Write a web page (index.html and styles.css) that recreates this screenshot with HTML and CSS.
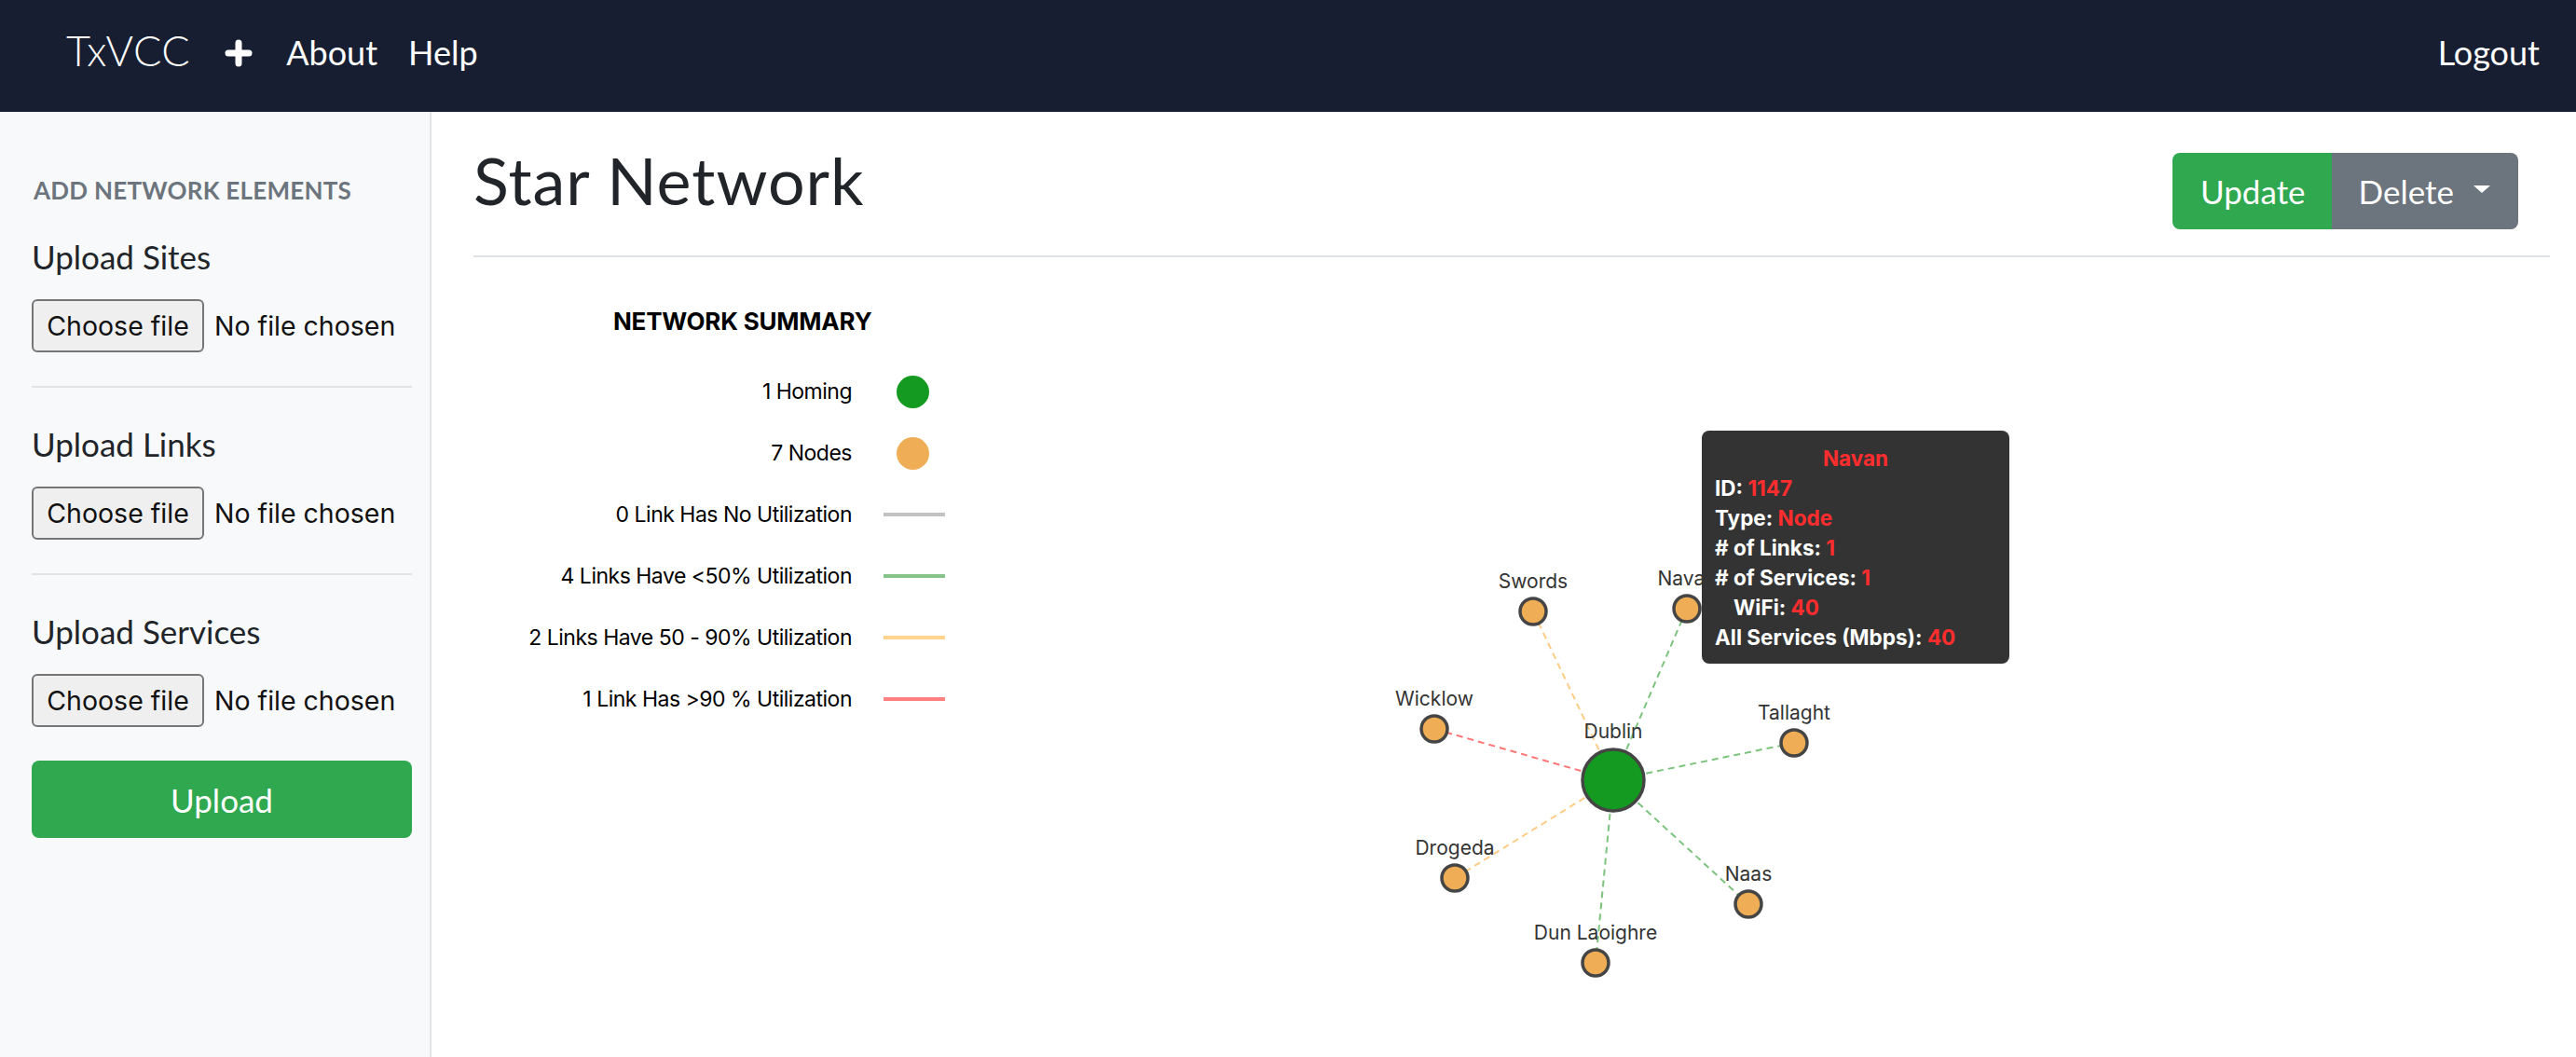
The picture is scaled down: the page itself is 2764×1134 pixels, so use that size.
FILE: index.html
```html
<!DOCTYPE html>
<html lang="en">
<head>
<meta charset="utf-8">
<title>TxVCC - Star Network</title>
<link rel="stylesheet" href="styles.css">
</head>
<body>
<nav class="navbar">
  <a class="brand">TxVCC</a>
  <a class="nav-plus" aria-label="Add">
    <svg width="30" height="30" viewBox="0 0 30 30"><path d="M15 4v22M4 15h22" stroke="#fff" stroke-width="7" stroke-linecap="round" fill="none"/></svg>
  </a>
  <a class="nav-link">About</a>
  <a class="nav-link">Help</a>
  <a class="nav-link logout">Logout</a>
</nav>
<div class="layout">
  <aside class="sidebar">
    <h6 class="sidebar-heading">ADD NETWORK ELEMENTS</h6>
    <section class="upload-section">
      <h5 class="upload-title">Upload Sites</h5>
      <div class="file-input"><span class="file-btn">Choose file</span><span class="file-name">No file chosen</span></div>
      <hr class="side-hr">
    </section>
    <section class="upload-section">
      <h5 class="upload-title">Upload Links</h5>
      <div class="file-input"><span class="file-btn">Choose file</span><span class="file-name">No file chosen</span></div>
      <hr class="side-hr">
    </section>
    <section class="upload-section last">
      <h5 class="upload-title">Upload Services</h5>
      <div class="file-input"><span class="file-btn">Choose file</span><span class="file-name">No file chosen</span></div>
    </section>
    <button class="upload-btn">Upload</button>
  </aside>
  <main class="main">
    <header class="page-header">
      <h1 class="page-title">Star Network</h1>
      <div class="btn-group">
        <button class="btn btn-update">Update</button>
        <button class="btn btn-delete">Delete<span class="caret"></span></button>
      </div>
    </header>
    <hr class="main-hr">
    <div class="content">
      <div class="legend">
        <div class="legend-heading">NETWORK SUMMARY</div>
        <div class="legend-grid">
          <span class="legend-text">1 Homing</span><span class="swatch dot dot-green"></span>
          <span class="legend-text">7 Nodes</span><span class="swatch dot dot-orange"></span>
          <span class="legend-text">0 Link Has No Utilization</span><span class="swatch bar bar-gray"></span>
          <span class="legend-text">4 Links Have &lt;50% Utilization</span><span class="swatch bar bar-green"></span>
          <span class="legend-text">2 Links Have 50 - 90% Utilization</span><span class="swatch bar bar-orange"></span>
          <span class="legend-text">1 Link Has &gt;90 % Utilization</span><span class="swatch bar bar-red"></span>
        </div>
      </div>
      <div class="graph">
        <svg class="graph-svg" width="1722" height="858" viewBox="1014 276 1722 858">
          <g class="links" fill="none" stroke-width="2" stroke-dasharray="7 5">
            <line x1="1731" y1="837" x2="1645" y2="656" stroke="#ffcc85"/>
            <line x1="1731" y1="837" x2="1810" y2="653" stroke="#7cc47e"/>
            <line x1="1731" y1="837" x2="1539" y2="782" stroke="#ff7676"/>
            <line x1="1731" y1="837" x2="1925" y2="797" stroke="#7cc47e"/>
            <line x1="1731" y1="837" x2="1561" y2="942" stroke="#ffcc85"/>
            <line x1="1731" y1="837" x2="1712" y2="1033" stroke="#7cc47e"/>
            <line x1="1731" y1="837" x2="1876" y2="970" stroke="#7cc47e"/>
          </g>
          <g class="nodes" stroke="#454545" stroke-width="3.5">
            <circle cx="1731" cy="837" r="33" fill="#149a20"/>
            <circle cx="1645" cy="656" r="14" fill="#efae56"/>
            <circle cx="1810" cy="653" r="14" fill="#efae56"/>
            <circle cx="1539" cy="782" r="14" fill="#efae56"/>
            <circle cx="1925" cy="797" r="14" fill="#efae56"/>
            <circle cx="1561" cy="942" r="14" fill="#efae56"/>
            <circle cx="1712" cy="1033" r="14" fill="#efae56"/>
            <circle cx="1876" cy="970" r="14" fill="#efae56"/>
          </g>
          <g class="labels">
            <text x="1731" y="792">Dublin</text>
            <text x="1645" y="631">Swords</text>
            <text x="1810" y="628">Navan</text>
            <text x="1539" y="757">Wicklow</text>
            <text x="1925" y="772">Tallaght</text>
            <text x="1561" y="917">Drogeda</text>
            <text x="1712" y="1008">Dun Laoighre</text>
            <text x="1876" y="945">Naas</text>
          </g>
        </svg>
        <div class="tooltip">
          <div class="tip-title">Navan</div>
          <div class="tip-row">ID: <span class="tip-val">1147</span></div>
          <div class="tip-row">Type: <span class="tip-val">Node</span></div>
          <div class="tip-row"># of Links: <span class="tip-val">1</span></div>
          <div class="tip-row"># of Services: <span class="tip-val">1</span></div>
          <div class="tip-row tip-indent">WiFi: <span class="tip-val">40</span></div>
          <div class="tip-row">All Services (Mbps): <span class="tip-val">40</span></div>
        </div>
      </div>
    </div>
  </main>
</div>
</body>
</html>
```
FILE: styles.css
```css
* { box-sizing: border-box; }
html, body { margin: 0; padding: 0; }
body {
  font-family: Lato, "Open Sans", sans-serif;
  color: #212529;
  background: #fff;
  overflow: hidden;
  height: 1134px;
}

/* Navbar */
.navbar {
  height: 120px;
  background: #171e31;
  display: flex;
  align-items: center;
  padding: 0 39px 0 71px;
  color: #fff;
}
.brand {
  font-size: 45px;
  font-weight: 300;
  letter-spacing: 0.5px;
  margin-bottom: 12px;
  line-height: 1.2;
}
.nav-plus {
  display: flex;
  margin-left: 37px;
  margin-bottom: 6px;
}
.nav-link {
  font-size: 36px;
  line-height: 1.2;
  margin-bottom: 6px;
  margin-left: 36px;
}
.nav-link + .nav-link { margin-left: 33px; }
.nav-link.logout { margin-left: auto; }

/* Layout */
.layout {
  display: flex;
  height: 1014px;
}
.sidebar {
  width: 463px;
  flex: none;
  background: #f8f9fa;
  border-right: 2px solid #e4e5e6;
  padding: 67px 19px 0 34px;
}
.sidebar-heading {
  margin: 0 0 32.5px 2px;
  font-size: 26px;
  line-height: 34px;
  font-weight: 700;
  color: #6c757d;
  letter-spacing: 0.25px;
}
.upload-title {
  margin: 0 0 25.5px;
  font-size: 35px;
  line-height: 42px;
  font-weight: 400;
  color: #212529;
}
.file-input {
  display: flex;
  align-items: center;
  height: 57px;
  font-family: Inter, "Liberation Sans", sans-serif;
  font-size: 28.5px;
  color: #111;
}
.file-btn {
  width: 185px;
  height: 57px;
  display: flex;
  align-items: center;
  justify-content: center;
  background: #efefef;
  border: 2px solid #767676;
  border-radius: 6px;
}
.file-name { margin-left: 11px; }
.side-hr {
  margin: 35.5px 0 39px;
  border: 0;
  border-top: 2px solid #e1e3e5;
  height: 0;
}
.upload-btn {
  display: block;
  width: 408px;
  height: 83px;
  margin-top: 36px;
  background: #2fa84f;
  color: #fff;
  border: 0;
  border-radius: 8px;
  font-family: Lato, sans-serif;
  font-size: 35px;
}

/* Main */
.main {
  flex: 1;
  padding: 0 28px 0 45px;
  min-width: 0;
}
.page-header {
  display: flex;
  justify-content: space-between;
  align-items: flex-start;
  padding-top: 31px;
}
.page-title {
  margin: 0;
  font-size: 70px;
  line-height: 84px;
  font-weight: 400;
  letter-spacing: 1px;
  color: #212529;
}
.btn-group {
  display: flex;
  margin-top: 13px;
  margin-right: 34px;
}
.btn {
  height: 82px;
  border: 0;
  color: #fff;
  font-family: Lato, sans-serif;
  font-size: 35px;
  display: flex;
  align-items: center;
}
.btn-update {
  background: #2fa84f;
  padding: 0 28px 0 30px;
  border-radius: 8px 0 0 8px;
}
.btn-delete {
  background: #6c757d;
  padding: 0 30px 0 29px;
  border-radius: 0 8px 8px 0;
}
.caret {
  display: inline-block;
  width: 0;
  height: 0;
  margin-left: 21px;
  margin-bottom: 4px;
  border-left: 9.5px solid transparent;
  border-right: 9.5px solid transparent;
  border-top: 8px solid #fff;
}
.main-hr {
  margin: 28px 0 0;
  border: 0;
  border-top: 2px solid #dee2e6;
  height: 0;
}

/* Content */
.content {
  display: flex;
  height: 858px;
}
.legend {
  width: 506px;
  flex: none;
  padding-top: 49px;
  font-family: Inter, "Liberation Sans", sans-serif;
  color: #000;
}
.legend-heading {
  height: 40px;
  line-height: 40px;
  margin: 0 0 22px 150px;
  font-size: 26px;
  font-weight: 700;
  letter-spacing: -0.2px;
}
.legend-grid {
  display: grid;
  grid-template-columns: 406px 66px;
  column-gap: 34px;
  grid-auto-rows: 66px;
  align-items: center;
}
.legend-text {
  justify-self: end;
  font-size: 23px;
  letter-spacing: -0.5px;
}
.swatch { justify-self: center; }
.dot {
  width: 35px;
  height: 35px;
  border-radius: 50%;
  margin-right: 4px;
}
.dot-green { background: #149a20; }
.dot-orange { background: #efae56; }
.bar {
  width: 66px;
  height: 4px;
}
.bar-gray { background: #c2c2c2; }
.bar-green { background: #86c388; }
.bar-orange { background: #ffd48e; }
.bar-red { background: #ff8080; }

.graph {
  flex: 1;
  position: relative;
}
.graph-svg { display: block; }
.labels text {
  font-family: Inter, "Liberation Sans", sans-serif;
  font-size: 21px;
  fill: #333;
  text-anchor: middle;
}

.tooltip {
  position: absolute;
  left: 812px;
  top: 186px;
  width: 330px;
  height: 250px;
  background: #333;
  border-radius: 8px;
  padding: 14px 14px 12px;
  font-family: Inter, "Liberation Sans", sans-serif;
  font-weight: 700;
  font-size: 22.5px;
  line-height: 32px;
  color: #fff;
}
.tip-title {
  text-align: center;
  color: #ff2d2d;
}
.tip-val { color: #ff2d2d; }
.tip-indent { padding-left: 20px; }
```
